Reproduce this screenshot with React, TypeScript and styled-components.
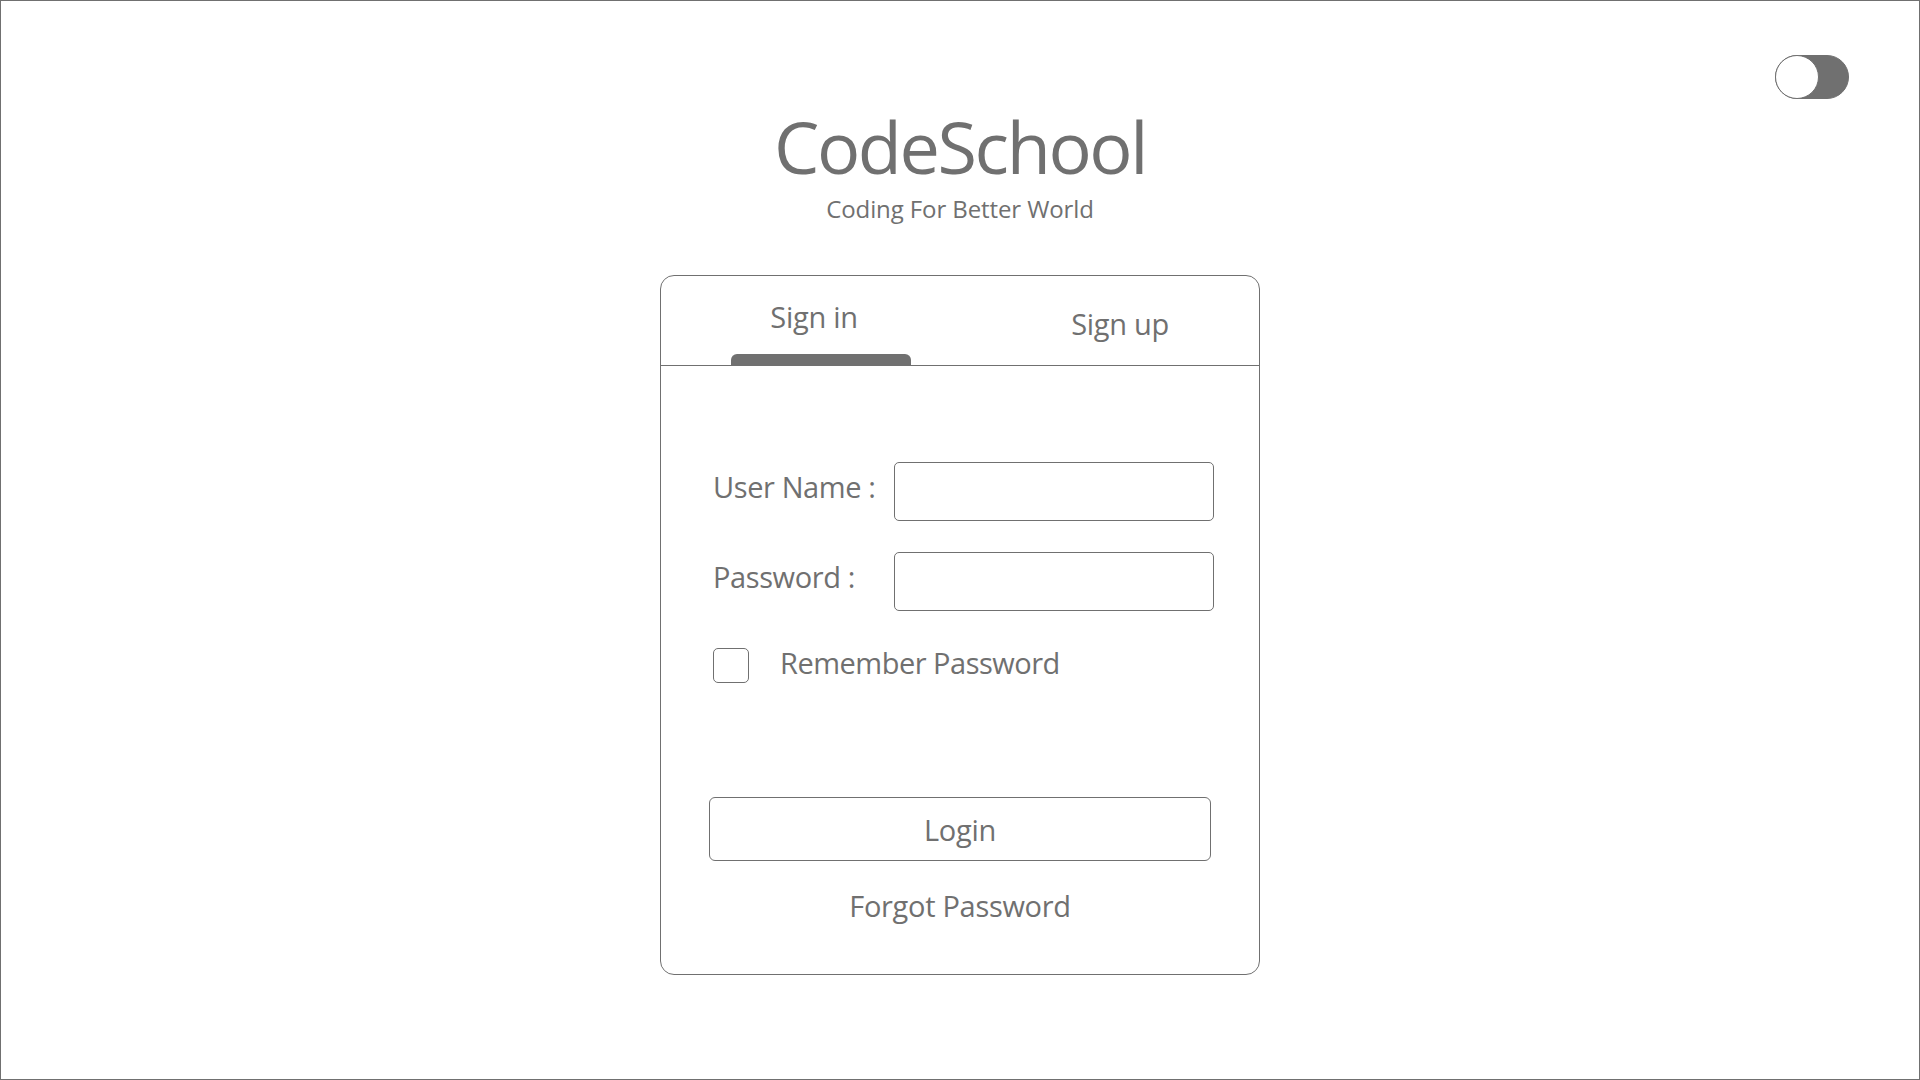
import React from "react";
import styled, { createGlobalStyle } from "styled-components";

const GlobalStyle = createGlobalStyle`
  html, body { margin: 0; padding: 0; background: #ffffff; }
  body {
    font-family: "Open Sans", "Noto Sans", "Liberation Sans", sans-serif;
    color: #707070;
  }
  * { box-sizing: border-box; }
`;

const Page = styled.div`
  width: 1920px;
  height: 1080px;
  border: 1px solid #707070;
  display: flex;
  flex-direction: column;
  align-items: center;
  background: #ffffff;
`;

const Header = styled.header`
  width: 100%;
  display: grid;
  grid-template-columns: 1fr auto 1fr;
  align-items: start;
`;

const Brand = styled.div`
  grid-column: 2;
  display: flex;
  flex-direction: column;
  align-items: center;
  padding-top: 109px;
`;

const Title = styled.h1`
  margin: 0;
  font-size: 72px;
  font-weight: 400;
  line-height: 72px;
  letter-spacing: -2.4px;
`;

const Subtitle = styled.p`
  margin: 12px 0 0;
  font-size: 24px;
  line-height: 29px;
  letter-spacing: -0.1px;
`;

const ToggleSlot = styled.div`
  grid-column: 3;
  justify-self: end;
  margin: 54px 70px 0 0;
`;

const ToggleTrack = styled.button`
  width: 74px;
  height: 44px;
  padding: 0;
  border: 1px solid #707070;
  border-radius: 22px;
  background: #707070;
  display: flex;
  align-items: center;
  cursor: pointer;
`;

const ToggleKnob = styled.span`
  width: 44px;
  height: 44px;
  margin: -1px;
  border-radius: 50%;
  border: 1px solid #707070;
  background: #ffffff;
`;

const Card = styled.section`
  margin-top: 52px;
  width: 600px;
  height: 700px;
  border: 1px solid #707070;
  border-radius: 14px;
  display: flex;
  flex-direction: column;
`;

const TabBar = styled.nav`
  height: 90px;
  padding-top: 7px;
  border-bottom: 1px solid #707070;
  display: grid;
  grid-template-columns: 306px 1fr;
`;

const Tab = styled.div<{ $offset?: number }>`
  display: flex;
  flex-direction: column;
  align-items: center;
  padding-left: ${(p) => p.$offset ?? 0}px;
  cursor: pointer;
`;

const TabLabel = styled.span`
  flex: 1;
  display: flex;
  align-items: center;
  font-size: 29px;
  line-height: 40px;
  letter-spacing: -0.3px;
`;

const Indicator = styled.span`
  width: 180px;
  height: 11px;
  margin: 4px 0 0 14px;
  background: #707070;
  border-radius: 6px 6px 0 0;
`;

const Body = styled.div`
  display: flex;
  flex-direction: column;
  align-items: flex-start;
  padding: 96px 45px 0 48px;
`;

const FieldsRow = styled.div`
  display: flex;
  align-items: flex-start;
  padding-left: 4px;
`;

const LabelColumn = styled.div`
  width: 181px;
  margin-top: 5px;
  display: flex;
  flex-direction: column;
  gap: 50px;
`;

const FieldLabel = styled.label`
  font-size: 29px;
  line-height: 40px;
  letter-spacing: -0.4px;
`;

const InputColumn = styled.div`
  display: flex;
  flex-direction: column;
  gap: 31px;
`;

const TextInput = styled.input`
  width: 320px;
  height: 59px;
  border: 1px solid #707070;
  border-radius: 5px;
  padding: 0 12px;
  font-family: inherit;
  font-size: 22px;
  color: #707070;
  outline: none;
`;

const CheckRow = styled.label`
  margin-top: 37px;
  padding-left: 4px;
  display: flex;
  align-items: center;
  gap: 31px;
  cursor: pointer;
`;

const CheckBox = styled.span`
  width: 36px;
  height: 35px;
  border: 1px solid #707070;
  border-radius: 5px;
`;

const CheckText = styled.span`
  margin-top: -6px;
  font-size: 29px;
  line-height: 40px;
  letter-spacing: -0.5px;
`;

const LoginButton = styled.button`
  margin-top: 114px;
  width: 502px;
  height: 64px;
  border: 1px solid #707070;
  border-radius: 6px;
  background: #ffffff;
  color: #707070;
  font-family: inherit;
  font-size: 29px;
  letter-spacing: -0.3px;
  cursor: pointer;
`;

const ForgotLink = styled.a`
  margin-top: 25px;
  width: 502px;
  text-align: center;
  font-size: 29px;
  line-height: 40px;
  letter-spacing: -0.3px;
  color: #707070;
  text-decoration: none;
  cursor: pointer;
`;

export default function App() {
  return (
    <>
      <GlobalStyle />
      <Page>
        <Header>
          <Brand>
            <Title>CodeSchool</Title>
            <Subtitle>Coding For Better World</Subtitle>
          </Brand>
          <ToggleSlot>
            <ToggleTrack aria-label="Toggle theme">
              <ToggleKnob />
            </ToggleTrack>
          </ToggleSlot>
        </Header>
        <Card>
          <TabBar>
            <Tab>
              <TabLabel>Sign in</TabLabel>
              <Indicator />
            </Tab>
            <Tab $offset={14}>
              <TabLabel>Sign up</TabLabel>
            </Tab>
          </TabBar>
          <Body>
            <FieldsRow>
              <LabelColumn>
                <FieldLabel htmlFor="username">User Name :</FieldLabel>
                <FieldLabel htmlFor="password">Password :</FieldLabel>
              </LabelColumn>
              <InputColumn>
                <TextInput id="username" type="text" />
                <TextInput id="password" type="password" />
              </InputColumn>
            </FieldsRow>
            <CheckRow>
              <CheckBox />
              <CheckText>Remember Password</CheckText>
            </CheckRow>
            <LoginButton>Login</LoginButton>
            <ForgotLink>Forgot Password</ForgotLink>
          </Body>
        </Card>
      </Page>
    </>
  );
}
